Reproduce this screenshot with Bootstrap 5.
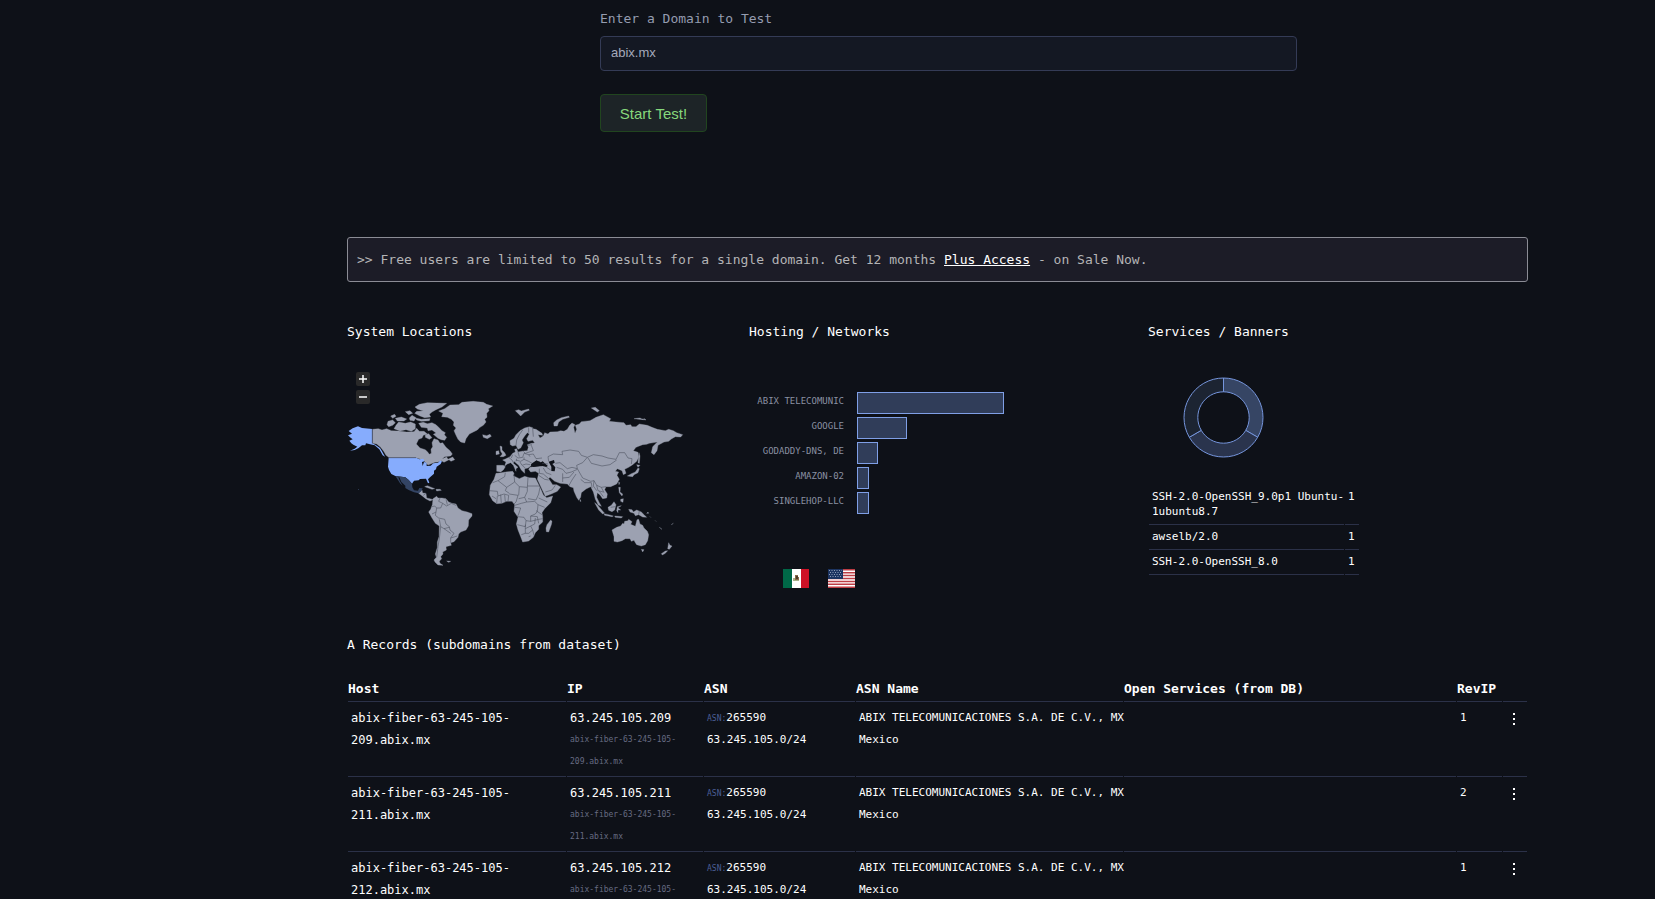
<!DOCTYPE html>
<html lang="en">
<head>
<meta charset="utf-8">
<meta name="viewport" content="width=device-width, initial-scale=1">
<title>Domain test results</title>
<link href="https://cdn.jsdelivr.net/npm/bootstrap@5.3.0/dist/css/bootstrap.min.css" rel="stylesheet">
<style>
:root { --page: #0e1118; --line: #2b3148; --accent: #7f9fe6; }
html { scrollbar-width: none; }
body { background: var(--page); color: #fff; font: 13px/22px "DejaVu Sans Mono", monospace; }
.page-main { margin-left: 347px; margin-right: 127px; }
.domain-form { margin-left: 253px; width: 59%; padding-top: 8px; height: 237px; }
.domain-form label { color: #959cb0; }
.domain-input, .domain-input:focus { height: 35px; margin-top: 6px; background: #141823; border-color: #343b56; border-radius: 4px; color: #a5aabb; font: 13px "Liberation Sans", Arial, sans-serif; padding: 0 10px 2px; }
.start-btn { width: 107px; height: 38px; margin-top: 23px; padding: 0; background: #1d2427; border: 1px solid #21451f; border-radius: 4px; color: #86d97c; font: 15px "Liberation Sans", Arial, sans-serif; }
.notice { height: 45px; padding: 0 9px; background: #1c1c27; border: 1px solid #8b8c95; border-radius: 3px; color: #b4b4b6; }
.notice a { color: #fff; }
.panels { display: grid; grid-template-columns: 402px 399px 1fr; margin-top: 39px; height: 313px; }
.panel-title, .records-title { font-size: 13px; line-height: 22px; font-weight: 400; margin: 0; }
.map-box { margin-top: 17px; }
.map-box > svg { display: block; width: 340px; height: 220px; }
.map-zoom { position: absolute; left: 9px; top: 12px; display: grid; gap: 4px; }
.map-zoom button { width: 14px; height: 14px; padding: 0; border: 0; border-radius: 2px; background: #292929; display: flex; align-items: center; justify-content: center; }
.bars { margin: 49px 0 0 0; }
.bar-row { height: 25px; display: grid; grid-template-columns: 95px 1fr; column-gap: 13px; }
.bar-row span { font-size: 9px; line-height: 18px; text-align: right; color: #8a90a2; white-space: nowrap; }
.bar-fill { height: 22px; background: #303d59; border: 1px solid var(--accent); }
.flags { margin: 52px 0 0 34px; gap: 19px; }
.flags svg { display: block; }
.donut { display: block; margin: 34px 0 0 35px; }
.svc-table { width: 212px; margin-top: 27px; font-size: 11px; line-height: 15px; table-layout: fixed; border-collapse: separate; border-spacing: 1px 0; }
.svc-table td { padding: 4px 0 5px 3px; border-bottom: 1px solid var(--line); white-space: nowrap; vertical-align: top; }
.rec-table { width: 100%; margin-top: 20px; font-size: 11px; table-layout: fixed; border-collapse: separate; border-spacing: 1px 0; }
.rec-table th { font-size: 13px; line-height: 22px; padding: 2px 0 1px 0; border-bottom: 1px solid var(--line); white-space: nowrap; }
.rec-table td { height: 75px; padding: 5px 0 3px 3px; line-height: 22px; border-bottom: 1px solid var(--line); vertical-align: top; white-space: nowrap; }
.rec-table .addr { font-size: 12px; }
.rev { display: block; font-size: 8px; color: #666b82; }
.asn-tag { font-size: 8px; line-height: 1; color: #4c5f96; }
.dots { display: block; width: 16px; height: 22px; padding: 0; border: 0; background: none; }
.dots svg { display: block; margin: 3px auto 0; }
</style>
</head>
<body>
<main class="page-main">
  <form class="domain-form" onsubmit="return false">
    <label class="d-block" for="domain">Enter a Domain to Test</label>
    <input class="form-control domain-input" id="domain" type="text" value="abix.mx">
    <button class="start-btn" type="submit">Start Test!</button>
  </form>

  <div class="notice d-flex align-items-center"><div>&gt;&gt; Free users are limited to 50 results for a single domain. Get 12 months <a href="#">Plus Access</a> - on Sale Now.</div></div>

  <div class="panels">
    <section>
      <h2 class="panel-title">System Locations</h2>
      <div class="map-box position-relative">
        <svg viewBox="21 0 1020 660" role="img" aria-label="World map">
          <g fill="#9ca1b1" stroke="#9ca1b1" stroke-width="1">
            <!-- Greenland and the Arctic islands -->
            <path d="M296 153L314 146 330 135 356 134 366 127 400 124 412 125 430 127 440 133 458 138 445 146 447 152 440 160 441 172 434 178 438 186 430 196 420 202 412 210 400 216 388 222 378 236 374 249 362 246 354 238 348 226 342 212 348 204 340 196 342 186 334 178 322 172 305 170 309 160z"/>
            <path d="M225 141L238 133 262 128 290 129 320 130 306 141 288 149 276 156 268 163 272 171 254 173 240 168 224 160 230 154 250 153 232 147z"/>
            <path d="M144 184L158 180 166 188 158 196 146 200 141 194zM168 196L176 186 196 190 212 186 226 192 226 206 214 214 198 209 180 213 162 206zM152 168L164 163 168 169 158 175zM166 175L184 171 200 177 192 183 172 183zM196 155L210 152 218 160 206 164zM208 174L216 166 228 173 222 183 210 181zM226 174L244 178 270 176 268 182 244 184 230 180z"/>
            <path d="M236 190L250 187 262 191 276 188 288 194 296 202 306 212 316 218 313 224 320 232 314 241 304 239 294 235 280 223 288 219 276 210 264 212 262 204 244 202zM256 224L266 221 276 233 268 238 256 232z"/>
            <!-- Canada -->
            <path d="M98 208L115 206 126 210 140 206 154 212 175 213 200 216 222 215 230 205 238 214 252 214 262 222 250 226 246 234 236 238 229 252 240 264 256 269 263 276 268 283 274 280 273 268 278 260 276 248 282 236 294 240 300 250 308 248 318 262 330 272 337 282 332 288 314 290 306 297 320 291 324 298 338 291 344 299 333 304 327 299 312 307 304 302 294 306 285 307 264 315 250 300 228 293 148 293 138 286 132 275 122 262 110 252 98 250z"/>
            <!-- Central and South America -->
            <path d="M236 400L246 390 248 399 258 400 260 414 270 416 279 419 270 423 257 416 246 407z"/>
            <path d="M254 380L262 377 284 386 276 388zM288 388L300 388 304 391 290 393z"/>
            <path d="M279 416L290 409 294 414 306 414 318 416 326 426 336 430 348 432 354 444 366 452 382 456 396 461 396 468 386 480 385 498 378 510 362 516 356 522 354 532 342 545 332 548 334 556 318 560 319 570 308 576 309 582 302 590 305 596 298 604 300 610 309 616 294 615 285 606 282 600 289 592 286 582 292 562 292 546 297 530 298 498 286 490 276 474 266 456 272 448 277 434zM320 603L332 604 326 607z"/>
            <g transform="translate(420 90)">
              <path d="M8 134L20 137 30 133 34 139 22 146 10 142zM106 62L116 59 124 63 146 57 148 61 134 66 122 78 116 72zM222 108L221 98 230 90 244 83 266 78 268 82 248 88 236 96 232 108zM334 54L346 52 358 62 352 66zM462 86L480 84 490 89zM486 88L498 90 494 86z"/>
              <path d="M60 168L66 170 66 180 74 188 78 196 70 200 60 200 67 192 62 184zM48 184L56 182 58 192 48 194z"/>
              <path d="M50 226L70 226 76 230 70 240 62 246 50 244z"/>
              <!-- Scandinavia -->
              <path d="M90 152L102 145 108 134 120 122 134 114 148 110 158 113 160 124 164 140 158 151 144 154 140 146 148 132 142 128 134 138 126 150 130 158 122 174 114 178 108 166 98 168 91 164z"/>
              <!-- Eurasian mainland -->
              <path d="M74 228L78 216 68 210 76 207 82 204 90 200 98 190 106 186 104 178 110 176 114 186 130 183 142 182 145 172 142 164 154 160 164 159 158 150 158 116 168 118 186 130 188 136 174 134 180 144 190 138 194 128 204 132 210 126 232 125 242 122 252 124 262 118 269 106 276 99 285 104 281 112 285 130 290 118 286 106 298 102 304 95 330 92 348 82 370 74 392 86 388 94 408 96 432 98 438 106 452 104 456 110 468 110 478 102 502 106 516 112 532 118 556 122 566 118 580 122 590 128 608 134 602 141 586 140 574 147 566 154 552 156 534 166 531 182 522 194 514 188 518 170 532 156 508 160 500 163 488 164 468 172 460 182 474 187 476 202 470 214 458 224 446 232 434 238 438 250 430 254 426 242 412 236 406 244 416 246 411 256 418 268 410 282 392 290 378 290 374 299 382 312 380 324 368 326 360 315 352 308 350 322 358 338 364 349 355 345 346 328 340 306 332 290 318 297 304 308 302 322 296 331 290 322 282 304 280 293 270 290 262 282 240 280 224 274 210 262 206 266 218 284 230 284 242 291 232 304 212 313 196 319 187 300 172 268 176 250 166 244 152 246 146 238 150 232 166 230 188 228 200 232 202 226 186 220 178 214 168 212 156 220 152 228 144 234 134 236 134 250 124 240 116 226 102 214 100 220 114 232 108 236 108 244 100 226 92 218 82 222z"/>
              <!-- Africa -->
              <path d="M48 250L60 249 76 246 98 244 102 250 100 257 118 266 134 259 148 263 166 264 174 280 182 296 190 315 200 323 218 318 212 338 194 356 186 368 188 380 188 396 176 407 176 418 166 428 160 442 146 453 128 456 122 440 114 420 109 402 114 382 102 364 104 344 96 334 80 334 66 340 50 341 38 332 28 314 31 286 42 268z"/>
              <path d="M212 390L216 394 214 404 206 426 199 425 198 414 201 404z"/>
              <!-- East Asia and the Pacific -->
              <path d="M477 188L480 198 478 220 474 218zM470 224L480 226 474 232zM474 234L478 236 474 248 462 254 458 260 442 258 454 251 466 246zM416 276L419 278 417 284zM300 328L303 334 300 334z"/>
              <path d="M416 292L421 292 420 306 428 312 426 318 418 308zM422 328L430 326 429 337 422 334zM344 338L352 344 362 356 373 369 368 372 356 360zM372 371L386 374 400 378 396 380 374 376zM384 352L394 346 402 335 408 344 404 360 396 365 386 361zM412 350L424 347 414 353 422 360 414 360 414 368 410 362zM404 378L416 379 428 380 424 384 406 382zM446 358L456 359 460 366 470 360 484 366 492 374 500 382 488 381 476 374 466 377 462 370 450 366zM500 370L504 366 506 370zM510 380L512 382zM526 392L528 394zM538 412L546 418zM574 404L580 400z"/>
              <path d="M396 420L410 412 422 408 428 400 432 402 434 394 444 392 446 388 456 395 452 403 466 409 471 389 476 388 480 402 488 406 492 414 502 424 506 434 503 452 496 464 484 468 470 464 466 458 462 451 454 454 450 446 436 446 426 452 412 456 402 454 402 440zM484 478L492 479 488 486zM566 458L570 466 576 468 568 478 563 476zM563 482L556 490 547 495 544 491 556 483z"/>
            </g>
          </g>
          <!-- inland seas -->
          <g fill="#0e1118" transform="translate(420 90)">
            <path d="M206 215L222 210 224 218 217 222 226 232 224 244 214 243 214 230zM152 224L170 211 180 218 188 214 204 229 180 228 160 231z"/>
          </g>
          <!-- country borders -->
          <g fill="none" stroke="#444956" stroke-width="1.6" stroke-linejoin="round">
            <path d="M300 414L296 424 308 430 302 444 290 444 288 456 276 462M308 430L320 438 334 430 348 436M318 418L322 434M290 444L284 438 276 440M288 456L286 466 296 474 314 478 318 492 328 500 330 510 342 520 332 534 352 528M298 478L302 500 312 506 328 502M302 500L298 536 294 560 290 592M332 534L332 548M312 506L332 520 M258 400L250 406"/>
            <g transform="translate(420 90)">
              <path d="M128 120L118 134 110 150 108 166M146 112L146 128M158 114L160 140M142 166L156 164M104 196L114 204 128 202 132 190 146 194 160 192 168 206 186 204M114 186L118 200M86 202L96 210 100 218M98 194L94 204M130 184L136 190 160 182 154 166M108 210L122 214 132 208 146 214 156 220M120 216L126 226 138 222 150 224M128 228L136 234M110 206L108 214M132 202L132 208M146 194L150 200"/>
              <path d="M206 214L204 200 220 192 248 194 246 184 270 180 296 184 304 196 322 202 340 194 366 198 384 204 408 208 418 188 434 188 444 204 456 206 454 222M322 202L308 218 290 226 292 236 308 264 332 274 342 272 350 286 364 292 378 290M324 204L334 220 366 228 390 224 410 210M226 220L240 218 262 236 276 232 292 236M230 232L248 238 258 250 274 246 292 238M248 250L248 276M248 264L268 262 282 246M266 288L276 270 288 252M302 268L314 278 334 278M334 278L336 294M342 272L340 288 350 302M350 286L354 302 370 306M364 292L372 308 M358 304L370 320"/>
              <path d="M178 236L178 250 190 252 206 266M190 234L198 248 214 254M200 232L212 240M176 256L194 268 206 270M196 306L216 300 226 286M186 220L204 222"/>
              <path d="M76 248L74 260 54 272 38 278M54 272L80 292 76 302 88 310M80 292L104 276 102 254M104 276L118 290 116 316M118 290L142 292 144 262M142 292L142 304 134 322 116 326M142 288L180 288M180 292L176 312 168 330 144 326M28 302L52 304 54 318 72 312 86 316 84 334M52 318L50 340M62 314L64 340M74 314L76 336M36 318L48 326M88 312L114 316 108 336 102 342M134 322L140 336 164 334 174 344 172 364 166 372M104 346L124 340 140 336M104 352L122 354 116 372 112 380 132 382 138 392 152 394 152 378 166 372M138 392L136 410 112 404M136 404L136 430 124 434M136 416L152 408 164 402M152 394L176 388 188 386M152 408L158 420 162 436M136 430L146 430 158 420M146 440L152 438M174 344L194 352M176 324L202 336 M168 362L186 374M164 402L166 384M152 378L172 380 176 400"/>
              <path d="M478 362L476 374M392 352L406 350"/>
            </g>
          </g>
          <path d="M97 207L97 250 108 256 120 264 126 274 135 290 128 286 118 268 104 256 90 253 78 250 76 256 66 256 56 264 44 270 30 272 44 266 52 260 40 254 34 250 28 242 38 238 30 232 24 226 36 221 26 213 38 205 54 199 66 204z M146 293L228 293 238 298 250 296 254 304 246 306 248 318 252 306 260 308 260 318 272 317 280 310 294 308 300 302 306 304 302 312 290 320 288 328 282 332 282 341 270 352 264 358 268 368 264 370 258 356 240 357 236 361 222 362 216 371 206 360 196 352 184 350 166 348 154 342 147 330 144 320z" fill="#86acfd"/>
          <path d="M166 348L184 350 196 352 206 360 216 371 217 382 222 391 234 392 238 384 248 385 244 393 236 400 222 397 206 390 196 384 196 377 184 366 178 352 175 352 180 364 188 377 180 370 174 360z" fill="#334464"/>
          <path d="M54 387h3v2h-3z" fill="#334464"/>
          <path d="M97 207V250M146 293H228" stroke="#444956" stroke-width="2"/>
        </svg>
        <div class="map-zoom">
          <button type="button" aria-label="Zoom in"><svg width="8" height="8" viewBox="0 0 8 8"><path d="M0 4H8M4 0V8" stroke="#fff" stroke-width="1.5"/></svg></button>
          <button type="button" aria-label="Zoom out"><svg width="8" height="8" viewBox="0 0 8 8"><path d="M0 4H8" stroke="#fff" stroke-width="1.5"/></svg></button>
        </div>
      </div>
    </section>

    <section>
      <h2 class="panel-title">Hosting / Networks</h2>
      <div class="bars">
        <div class="bar-row"><span>ABIX TELECOMUNIC</span><div class="bar-fill" style="width:147px"></div></div>
        <div class="bar-row"><span>GOOGLE</span><div class="bar-fill" style="width:50px"></div></div>
        <div class="bar-row"><span>GODADDY-DNS, DE</span><div class="bar-fill" style="width:21px"></div></div>
        <div class="bar-row"><span>AMAZON-02</span><div class="bar-fill" style="width:12px"></div></div>
        <div class="bar-row"><span>SINGLEHOP-LLC</span><div class="bar-fill" style="width:12px"></div></div>
      </div>
      <div class="flags d-flex">
        <svg width="26" height="19" viewBox="0 0 26 19" role="img" aria-label="Mexico"><path fill="#006847" d="M0 0h9v19H0z"/><path fill="#fff" d="M9 0h9v19H9z"/><path fill="#ce1126" d="M18 0h8v19h-8z"/><path fill="#a9b18a" d="M10 9h6v3h-6z"/><path fill="#8a6a48" d="M12 6h3v2h1v3h-4z"/><path fill="#4d3c2c" d="M13 7h2v3h-2z"/></svg>
        <svg width="27" height="19" viewBox="0 0 27 19" role="img" aria-label="United States"><path fill="#fff" d="M0 0h27v19H0z"/><path stroke="#bd3d44" stroke-width="1.46" d="M0 .73h27M0 3.65h27M0 6.57h27M0 9.5h27M0 12.42h27M0 15.34h27M0 18.27h27"/><path fill="#1c3461" d="M0 0h15v10H0z"/><path stroke="#8d9cb6" stroke-width="1" stroke-dasharray="1 1.5" d="M1 1.5h13M2 3.5h12M1 5.5h13M2 7.5h12"/></svg>
      </div>
    </section>

    <section>
      <h2 class="panel-title">Services / Banners</h2>
      <svg class="donut" width="81" height="81" viewBox="-40.5 -40.5 81 81" role="img" aria-label="Share of services">
        <g stroke="#7595dc" stroke-width="1">
          <path fill="#364564" d="M0-39.5A39.5 39.5 0 0 1 34.2 19.75L22.25 12.85A25.7 25.7 0 0 0 0-25.7z"/>
          <path fill="#2a344d" d="M34.2 19.75A39.5 39.5 0 0 1-34.2 19.75L-22.25 12.85A25.7 25.7 0 0 0 22.25 12.85z"/>
          <path fill="#1c2432" d="M-34.2 19.75A39.5 39.5 0 0 1 0-39.5V-25.7A25.7 25.7 0 0 0-22.25 12.85z"/>
        </g>
      </svg>
      <table class="svc-table">
        <colgroup><col style="width:195px"><col></colgroup>
        <tbody>
        <tr><td>SSH-2.0-OpenSSH_9.0p1 Ubuntu-<br>1ubuntu8.7</td><td>1</td></tr>
        <tr><td>awselb/2.0</td><td>1</td></tr>
        <tr><td>SSH-2.0-OpenSSH_8.0</td><td>1</td></tr>
        </tbody>
      </table>
    </section>
  </div>

  <h2 class="records-title">A Records (subdomains from dataset)</h2>
  <table class="rec-table">
    <colgroup><col style="width:218px"><col style="width:136px"><col style="width:151px"><col style="width:267px"><col><col style="width:45px"><col style="width:24px"></colgroup>
    <thead><tr><th>Host</th><th>IP</th><th>ASN</th><th>ASN Name</th><th>Open Services (from DB)</th><th>RevIP</th><th></th></tr></thead>
    <tbody>
      <tr><td class="addr">abix-fiber-63-245-105-<br>209.abix.mx</td><td class="addr">63.245.105.209<span class="rev">abix-fiber-63-245-105-<br>209.abix.mx</span></td><td><span class="asn-tag">ASN:</span>265590<br>63.245.105.0/24</td><td>ABIX TELECOMUNICACIONES S.A. DE C.V., MX<br>Mexico</td><td></td><td>1</td><td><button class="dots" type="button" aria-label="Menu"><svg width="2" height="13" viewBox="0 0 2 13" fill="#fff"><path d="M0 0h2v2H0zM0 5h2v2H0zM0 10h2v2H0z"/></svg></button></td></tr>
      <tr><td class="addr">abix-fiber-63-245-105-<br>211.abix.mx</td><td class="addr">63.245.105.211<span class="rev">abix-fiber-63-245-105-<br>211.abix.mx</span></td><td><span class="asn-tag">ASN:</span>265590<br>63.245.105.0/24</td><td>ABIX TELECOMUNICACIONES S.A. DE C.V., MX<br>Mexico</td><td></td><td>2</td><td><button class="dots" type="button" aria-label="Menu"><svg width="2" height="13" viewBox="0 0 2 13" fill="#fff"><path d="M0 0h2v2H0zM0 5h2v2H0zM0 10h2v2H0z"/></svg></button></td></tr>
      <tr><td class="addr">abix-fiber-63-245-105-<br>212.abix.mx</td><td class="addr">63.245.105.212<span class="rev">abix-fiber-63-245-105-<br>212.abix.mx</span></td><td><span class="asn-tag">ASN:</span>265590<br>63.245.105.0/24</td><td>ABIX TELECOMUNICACIONES S.A. DE C.V., MX<br>Mexico</td><td></td><td>1</td><td><button class="dots" type="button" aria-label="Menu"><svg width="2" height="13" viewBox="0 0 2 13" fill="#fff"><path d="M0 0h2v2H0zM0 5h2v2H0zM0 10h2v2H0z"/></svg></button></td></tr>
    </tbody>
  </table>
</main>
<script src="https://cdn.jsdelivr.net/npm/bootstrap@5.3.0/dist/js/bootstrap.bundle.min.js"></script>
</body>
</html>
